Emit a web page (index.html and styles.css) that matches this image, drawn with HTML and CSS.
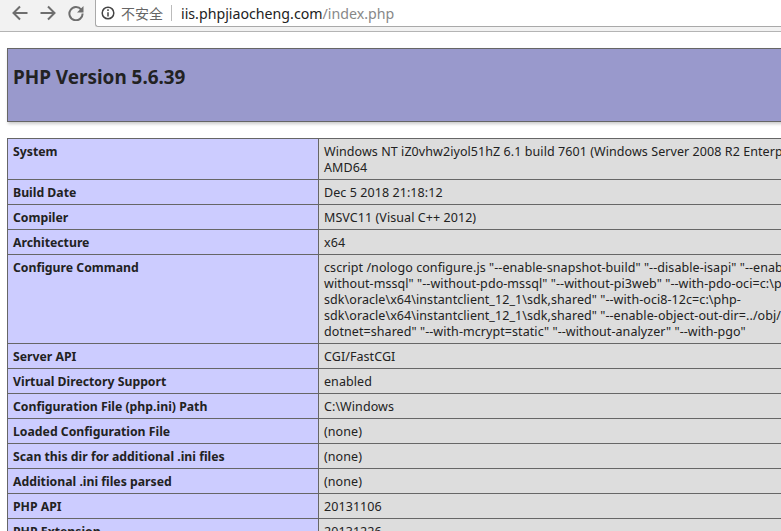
FILE: index.html
```html
<!DOCTYPE html>
<html lang="zh">
<head>
<meta charset="utf-8">
<title>phpinfo()</title>
<link rel="stylesheet" href="styles.css">
</head>
<body>
<header class="toolbar">
  <div class="nav">
    <svg class="nav-icon" viewBox="0 0 16 16"><path d="M15.5 8H1.5M8 1.5 1.5 8 8 14.5"/></svg>
    <svg class="nav-icon" viewBox="0 0 16 16"><path d="M.5 8H14.5M8 1.5 14.5 8 8 14.5"/></svg>
    <svg class="nav-icon" viewBox="0 0 16 16"><path d="M13.2 4.6A6.6 6.6 0 1 0 14.6 8.5"/><path class="solid" d="M15.5 1V7.5H9z"/></svg>
  </div>
  <div class="omnibox">
    <svg class="info" viewBox="0 0 14 14"><circle cx="7" cy="7" r="5.8"/><path d="M7 6.2V10.6M7 3.2V5"/></svg>
    <span class="insecure">不安全</span>
    <span class="sep"></span>
    <span class="url"><span class="host">iis.phpjiaocheng.com</span>/index.php</span>
  </div>
</header>
<main class="page">
  <div class="banner"><h1>PHP Version 5.6.39</h1></div>
  <table class="info-table">
    <tr><th>System</th><td>Windows NT iZ0vhw2iyol51hZ 6.1 build 7601 (Windows Server 2008 R2 Enterprise Edition Service Pack 1)<br>AMD64</td></tr>
    <tr><th>Build Date</th><td>Dec 5 2018 21:18:12</td></tr>
    <tr><th>Compiler</th><td>MSVC11 (Visual C++ 2012)</td></tr>
    <tr><th>Architecture</th><td>x64</td></tr>
    <tr><th>Configure Command</th><td>cscript /nologo configure.js "--enable-snapshot-build" "--disable-isapi" "--enable-debug-pack" "--<br>without-mssql" "--without-pdo-mssql" "--without-pi3web" "--with-pdo-oci=c:\php-<br>sdk\oracle\x64\instantclient_12_1\sdk,shared" "--with-oci8-12c=c:\php-<br>sdk\oracle\x64\instantclient_12_1\sdk,shared" "--enable-object-out-dir=../obj/" "--enable-com-<br>dotnet=shared" "--with-mcrypt=static" "--without-analyzer" "--with-pgo"</td></tr>
    <tr><th>Server API</th><td>CGI/FastCGI</td></tr>
    <tr><th>Virtual Directory Support</th><td>enabled</td></tr>
    <tr><th>Configuration File (php.ini) Path</th><td>C:\Windows</td></tr>
    <tr><th>Loaded Configuration File</th><td>(none)</td></tr>
    <tr><th>Scan this dir for additional .ini files</th><td>(none)</td></tr>
    <tr><th>Additional .ini files parsed</th><td>(none)</td></tr>
    <tr><th>PHP API</th><td>20131106</td></tr>
    <tr><th>PHP Extension</th><td>20131226</td></tr>
  </table>
</main>
</body>
</html>
```
FILE: styles.css
```css
html, body { margin: 0; height: 531px; overflow: hidden; background: #fff; }
body { font-family: "Noto Sans", "Noto Sans CJK SC", sans-serif; color: #222; }
.toolbar { display: flex; height: 32px; box-sizing: border-box; background: #f2f2f2; border-bottom: 1px solid #b4b4b4; }
.nav { display: flex; width: 95px; flex: none; gap: 12px; padding: 5px 0 0 12px; box-sizing: border-box; }
.nav-icon { width: 16px; height: 16px; fill: none; stroke: #6e6e6e; stroke-width: 2; }
.nav-icon .solid { fill: #6e6e6e; stroke: none; }
.omnibox { flex: 1; height: 27px; background: #fff; border: 1px solid #a9a9a9; border-top: 0; border-right: 0; border-bottom-left-radius: 3px; display: flex; align-items: center; box-sizing: border-box; }
.info { width: 14px; height: 14px; margin-left: 5px; fill: none; stroke: #444; stroke-width: 1.5; }
.insecure { margin-left: 6px; font-size: 14px; color: #666; }
.sep { width: 1px; height: 16px; background: #bbb; margin: 0 8px; }
.url { font-size: 14.2px; color: #888; margin-left: 1px; }
.host { color: #222; }
.page { padding-top: 16px; margin-left: 7px; width: 934px; }
.banner { height: 74px; box-sizing: border-box; background: #9999cc; border: 1px solid #666; box-shadow: 1px 2px 3px #ccc; padding: 15px 5px 0; }
.banner h1 { margin: 0; font-size: 18.9px; line-height: 26px; font-weight: 700; color: #222; }
.info-table { margin-top: 16px; border-collapse: collapse; width: 934px; table-layout: fixed; font-size: 12.5px; line-height: 16px; }
th, td { border: 1px solid #666; padding: 5px 5px 3px; vertical-align: top; text-align: left; white-space: nowrap; }
th { width: 300px; background: #ccccff; font-weight: 700; font-size: 12.25px; }
td { background: #dddddd; letter-spacing: .07px; }
```
